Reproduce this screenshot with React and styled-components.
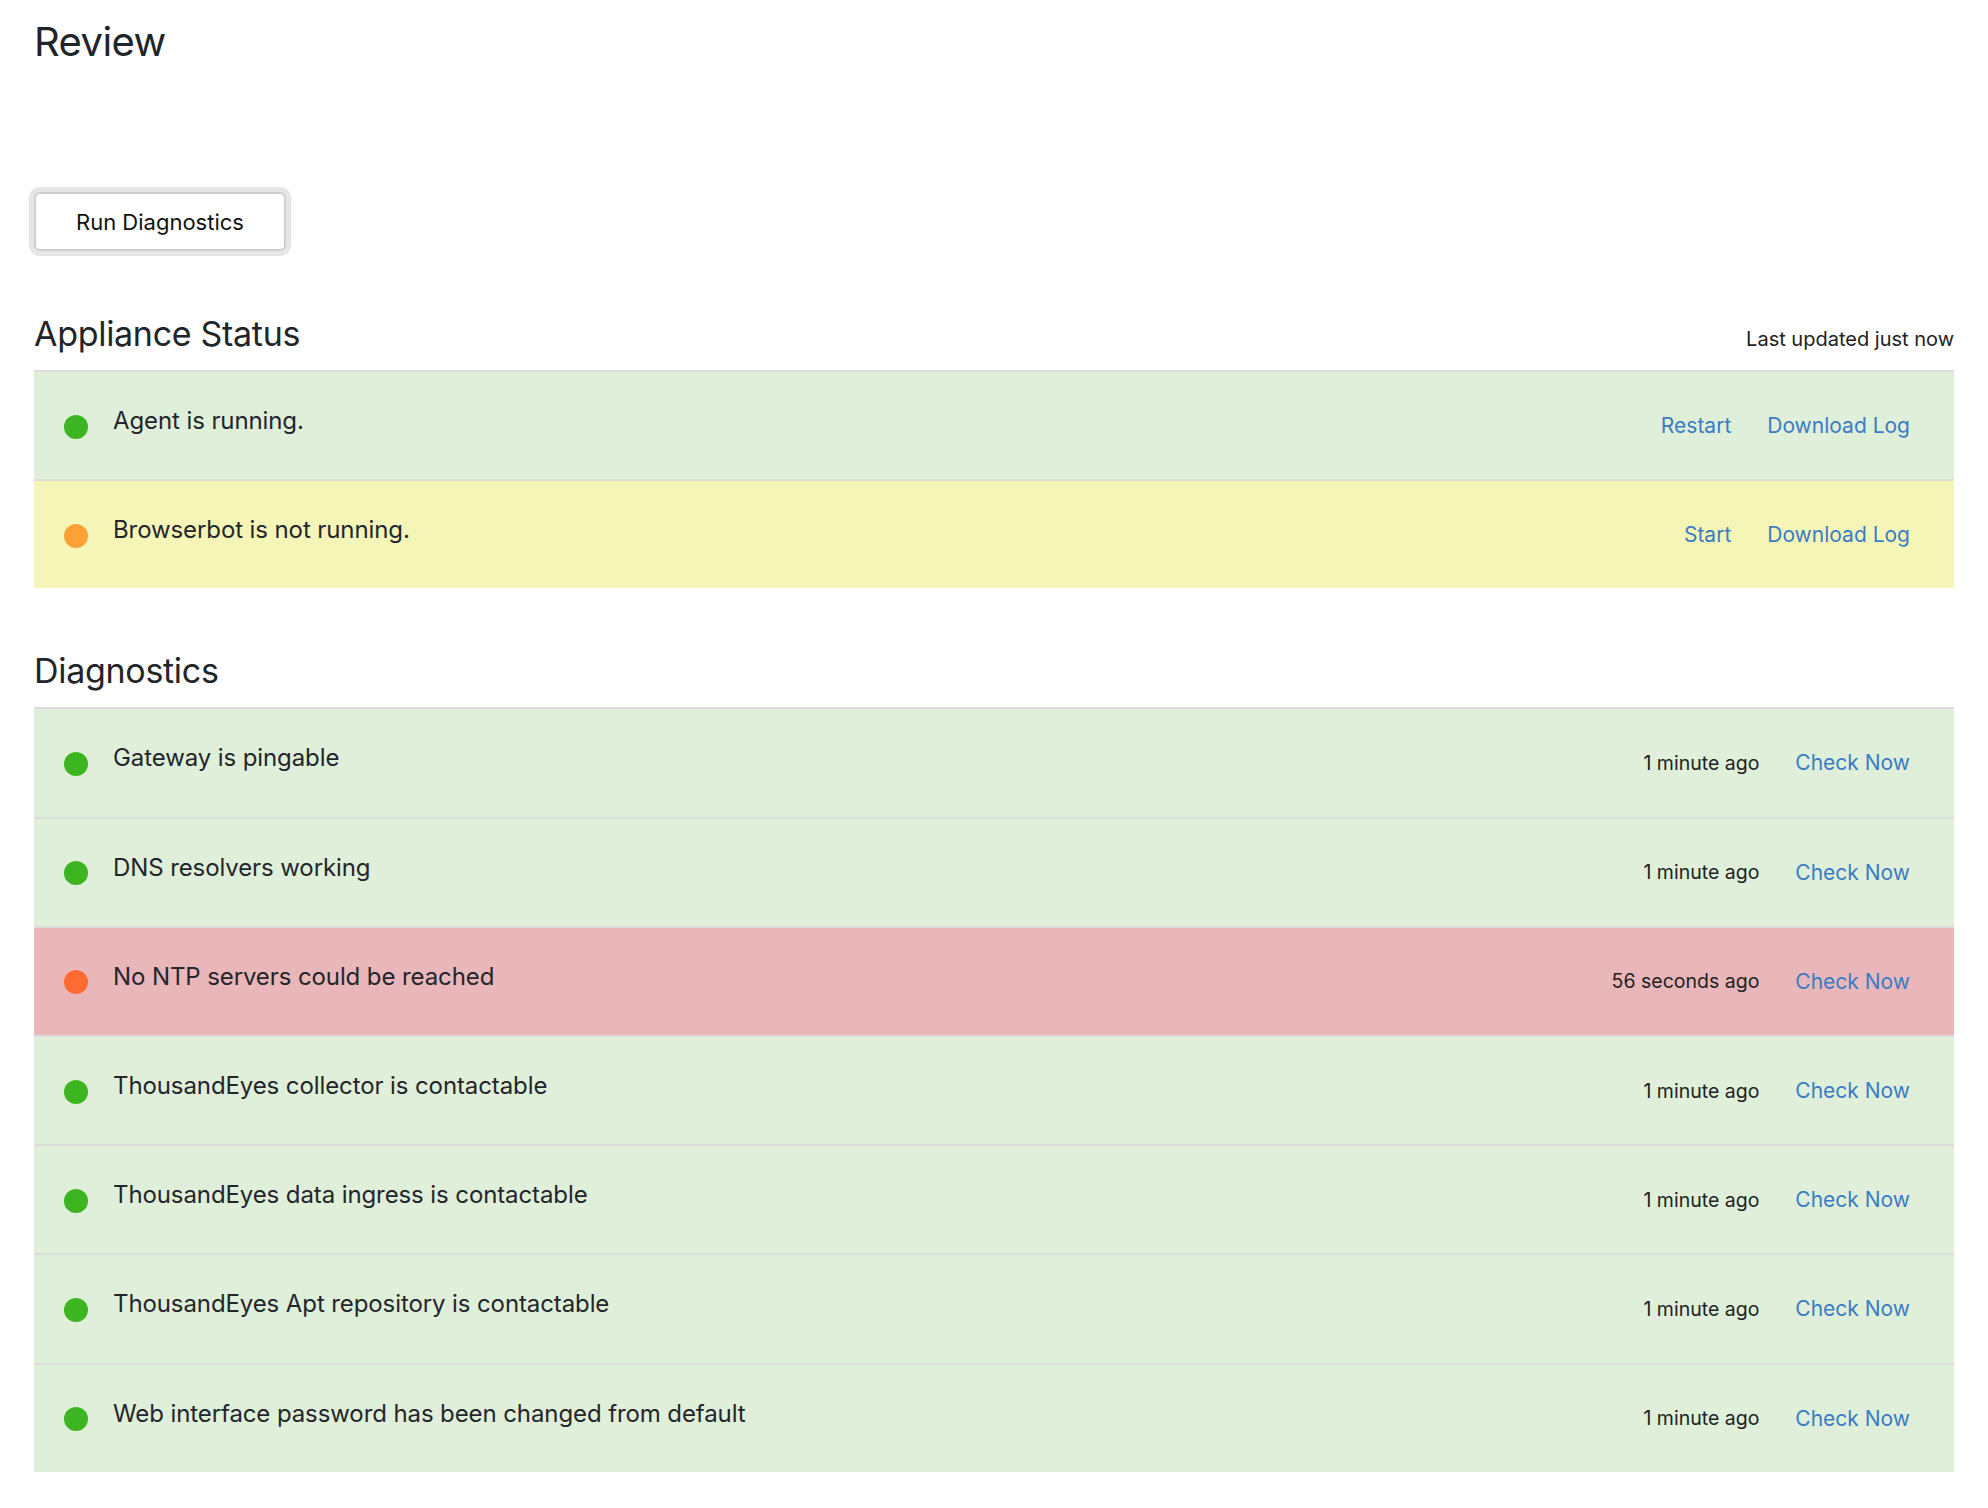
import React from "react";
import styled, { createGlobalStyle } from "styled-components";

const GlobalStyle = createGlobalStyle`
  body {
    margin: 0;
    background: #fff;
    font-family: Inter, "Noto Sans", "Liberation Sans", sans-serif;
    color: #212529;
  }
`;

const tones = {
  ok: { bg: "#e0efd9", dot: "#3cb521" },
  warn: { bg: "#f5f5b7", dot: "#fba137" },
  error: { bg: "#e9b6ba", dot: "#ff6a33" },
};

const Page = styled.div`
  padding: 0 34px 40px;
`;

const Title = styled.h1`
  margin: 0;
  padding-top: 18px;
  font-size: 40px;
  line-height: 48px;
  font-weight: 400;
  letter-spacing: -0.6px;
`;

const RunButton = styled.button`
  display: block;
  margin-top: 126px;
  height: 59px;
  padding: 0 40px;
  background: #fff;
  border: 2px solid #cdcdcd;
  border-radius: 6px;
  box-shadow: 0 0 0 5px #e6e6e6;
  font-family: inherit;
  font-size: 22px;
  color: #111;
  cursor: pointer;
`;

const Section = styled.section`
  margin-top: 63px;
`;

const SectionHeader = styled.div`
  display: flex;
  justify-content: space-between;
  align-items: baseline;
  margin-bottom: 16px;
`;

const SectionTitle = styled.h2`
  margin: 0;
  font-size: 34px;
  line-height: 40px;
  font-weight: 400;
  letter-spacing: -0.3px;
`;

const Updated = styled.span`
  font-size: 20px;
  color: #222;
`;

const List = styled.div`
  display: flex;
  flex-direction: column;
`;

const Row = styled.div`
  display: flex;
  align-items: center;
  box-sizing: border-box;
  height: 109.2px;
  padding: 0 44px 0 30px;
  border-top: 2px solid #dcdcdc;
  background: ${(p) => tones[p.$tone].bg};
`;

const Dot = styled.span`
  flex: none;
  width: 24px;
  height: 24px;
  margin-top: 2px;
  border-radius: 50%;
  background: ${(p) => tones[p.$tone].dot};
`;

const Label = styled.span`
  flex: 1;
  margin-left: 25px;
  padding-bottom: 10px;
  font-size: 24px;
  letter-spacing: -0.1px;
  color: #23262b;
`;

const Actions = styled.div`
  display: flex;
  align-items: center;
  gap: 36px;
`;

const Meta = styled.span`
  font-size: 19.5px;
  color: #222;
`;

const ActionLink = styled.a`
  font-size: 21px;
  color: #3a7cc4;
  text-decoration: none;
  cursor: pointer;
`;

const services = [
  { tone: "ok", label: "Agent is running.", action: "Restart" },
  { tone: "warn", label: "Browserbot is not running.", action: "Start" },
];

const checks = [
  { tone: "ok", label: "Gateway is pingable", time: "1 minute ago" },
  { tone: "ok", label: "DNS resolvers working", time: "1 minute ago" },
  { tone: "error", label: "No NTP servers could be reached", time: "56 seconds ago" },
  { tone: "ok", label: "ThousandEyes collector is contactable", time: "1 minute ago" },
  { tone: "ok", label: "ThousandEyes data ingress is contactable", time: "1 minute ago" },
  { tone: "ok", label: "ThousandEyes Apt repository is contactable", time: "1 minute ago" },
  { tone: "ok", label: "Web interface password has been changed from default", time: "1 minute ago" },
];

const App = () => {
  return (
    <Page>
      <GlobalStyle />
      <Title>Review</Title>
      <RunButton type="button">Run Diagnostics</RunButton>

      <Section>
        <SectionHeader>
          <SectionTitle>Appliance Status</SectionTitle>
          <Updated>Last updated just now</Updated>
        </SectionHeader>
        <List>
          {services.map((s) => (
            <Row key={s.label} $tone={s.tone}>
              <Dot $tone={s.tone} />
              <Label>{s.label}</Label>
              <Actions>
                <ActionLink>{s.action}</ActionLink>
                <ActionLink>Download Log</ActionLink>
              </Actions>
            </Row>
          ))}
        </List>
      </Section>

      <Section>
        <SectionHeader>
          <SectionTitle>Diagnostics</SectionTitle>
        </SectionHeader>
        <List>
          {checks.map((c) => (
            <Row key={c.label} $tone={c.tone}>
              <Dot $tone={c.tone} />
              <Label>{c.label}</Label>
              <Actions>
                <Meta>{c.time}</Meta>
                <ActionLink>Check Now</ActionLink>
              </Actions>
            </Row>
          ))}
        </List>
      </Section>
    </Page>
  );
};

export default App;
